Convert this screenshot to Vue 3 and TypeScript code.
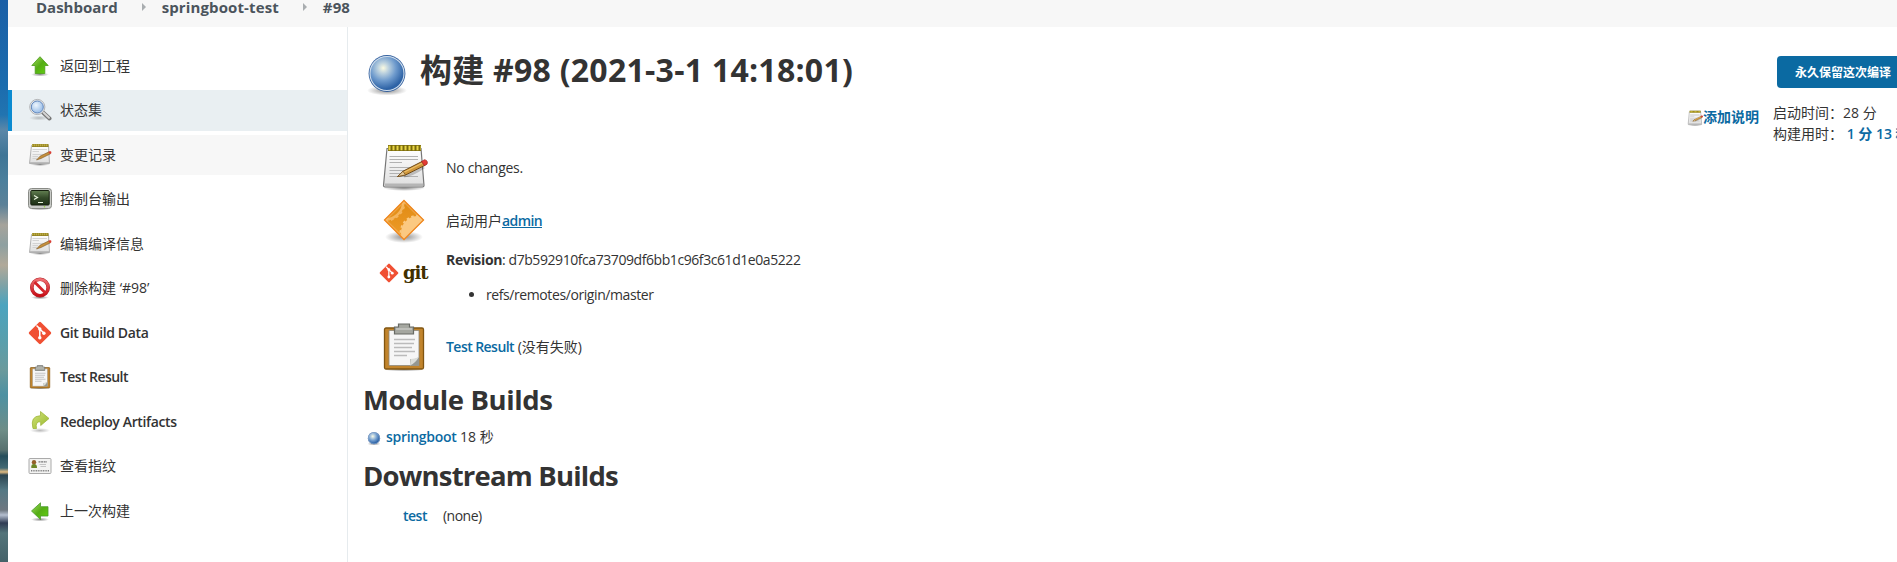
<script setup lang="ts">
interface Task { icon: string; label: string; state?: 'active' | 'hover'; tone?: 'latin' | 'latin tight' }

const crumbs: string[] = ['Dashboard', 'springboot-test', '#98']
const tasks: Task[] = [
  { icon: 'up', label: '返回到工程' },
  { icon: 'search', label: '状态集', state: 'active' },
  { icon: 'notepad-small', label: '变更记录', state: 'hover' },
  { icon: 'terminal', label: '控制台输出' },
  { icon: 'notepad-small', label: '编辑编译信息' },
  { icon: 'delete', label: '删除构建 ‘#98’' },
  { icon: 'git', label: 'Git Build Data', tone: 'latin' },
  { icon: 'clipboard', label: 'Test Result', tone: 'latin tight' },
  { icon: 'redo', label: 'Redeploy Artifacts', tone: 'latin' },
  { icon: 'card', label: '查看指纹' },
  { icon: 'previous', label: '上一次构建' },
]
</script>

<template>
  <div class="screen">
    <svg class="defs" width="0" height="0" aria-hidden="true">
      <defs>
        <linearGradient id="green" x1="0" y1="0" x2="1" y2="1">
          <stop offset="0" stop-color="#a4dc62" /><stop offset=".5" stop-color="#55ad15" /><stop offset="1" stop-color="#62d410" />
        </linearGradient>
        <linearGradient id="lime" x1="0" y1="0" x2="1" y2="1">
          <stop offset="0" stop-color="#d3e37c" /><stop offset="1" stop-color="#97b92b" />
        </linearGradient>
        <radialGradient id="shade"><stop offset="0" stop-color="#000" stop-opacity=".45" /><stop offset="1" stop-color="#000" stop-opacity="0" /></radialGradient>
        <radialGradient id="ball" cx=".39" cy=".34" r=".62">
          <stop offset="0" stop-color="#fbfbe2" /><stop offset=".25" stop-color="#bdd2df" /><stop offset=".6" stop-color="#6f9bcd" /><stop offset="1" stop-color="#2e63a6" />
        </radialGradient>
        <radialGradient id="lens" cx=".4" cy=".35" r=".7"><stop offset="0" stop-color="#edf5fd" /><stop offset="1" stop-color="#92b9e6" /></radialGradient>
        <linearGradient id="page" x1="0" y1="0" x2="0" y2="1"><stop offset="0" stop-color="#fff" /><stop offset="1" stop-color="#dedede" /></linearGradient>
        <linearGradient id="screenfill" x1="0" y1="0" x2="0" y2="1"><stop offset="0" stop-color="#638052" /><stop offset=".5" stop-color="#344a29" /><stop offset="1" stop-color="#1d3015" /></linearGradient>
        <linearGradient id="red" x1="0" y1="0" x2="0" y2="1"><stop offset="0" stop-color="#ee6d70" /><stop offset="1" stop-color="#c80f17" /></linearGradient>
        <linearGradient id="orange" x1="0" y1="0" x2="0" y2="1"><stop offset="0" stop-color="#e08a13" /><stop offset="1" stop-color="#ee9d2a" /></linearGradient>
        <clipPath id="diamond"><path d="M24 4.500 43.500 24 24 43.500 4.500 24z" /></clipPath>
      </defs>
      <symbol id="up" viewBox="0 0 24 24">
        <ellipse cx="12" cy="20.500" rx="9" ry="2" fill="url(#shade)" />
        <path d="M12 2.700 20.200 11.500H16.800V19.500H7.200V11.500H3.800z" fill="url(#green)" stroke="#4a9a18" stroke-width=".8" />
      </symbol>
      <symbol id="previous" viewBox="0 0 24 24">
        <ellipse cx="12" cy="20.500" rx="9" ry="2" fill="url(#shade)" />
        <path d="M3.500 12 12.500 3.800V7.700H20V17H12.500V20.500z" fill="url(#green)" stroke="#4a9a2c" stroke-width=".8" />
      </symbol>
      <symbol id="search" viewBox="0 0 24 24">
        <ellipse cx="11" cy="20" rx="10" ry="2.500" fill="url(#shade)" opacity=".5" />
        <path d="m15 14.500 6.500 6" stroke="#777" stroke-width="4" stroke-linecap="round" />
        <path d="m15.500 14.500 5.500 5.200" stroke="#d5d5d5" stroke-width="2" stroke-linecap="round" />
        <circle cx="9.300" cy="9" r="7.600" fill="#e6e8ea" stroke="#a4a6a8" stroke-width=".8" />
        <circle cx="9.300" cy="9" r="6" fill="url(#lens)" stroke="#6288bd" stroke-width="1" />
      </symbol>
      <symbol id="notepad" viewBox="0 0 48 48">
        <ellipse cx="24" cy="45" rx="21" ry="3" fill="url(#shade)" />
        <path d="M7 5.500H41L44 42.500Q44 44 42.500 44H5Q3.500 44 3.500 42.500z" fill="url(#page)" stroke="#777" stroke-width="1.200" />
        <path d="M5 40.500h38v2.500H5z" fill="#b5b5b5" />
        <path d="M9.500 13.500H38M9.500 16.500H38M9.500 19.500H22M9.500 24.500H33M9.500 27.500H29M9.500 30.500H25M9.500 33.500H38" stroke="#b1b1b1" stroke-width="1" />
        <path d="M8 5H41" stroke="#7a6a0c" stroke-width="6" />
        <path d="M8.500 5H41" stroke="#e8d646" stroke-width="4.500" stroke-dasharray="2 2" />
        <path d="M24 33q8-1 20-9" stroke="#0003" stroke-width="3" fill="none" />
        <path d="M17.500 33.500 23 28.200 42 18.500 45.800 19.300 45 22.300 25.500 32z" fill="#cf963a" stroke="#6f4a18" stroke-width="1" />
        <path d="M24 29.300 42 20.300" stroke="#ecc06a" stroke-width="1.200" />
        <path d="M17.500 33.500 23 28.200 25.500 32z" fill="#e5c794" stroke="#6f4a18" stroke-width=".7" />
        <path d="m41.500 18.500 3-1.800q4 .8 2.500 4.500l-2.500 1.500z" fill="#e33b34" stroke="#9d2420" stroke-width=".7" />
      </symbol>
      <symbol id="notepad-small" viewBox="0 0 24 24">
        <ellipse cx="12" cy="21.500" rx="10" ry="1.500" fill="url(#shade)" />
        <path d="M3.500 2.500H20.500L21.500 20.500H1.500z" fill="url(#page)" stroke="#a9a9a9" stroke-width=".9" />
        <path d="M2 19.500H21" stroke="#bcbcbc" />
        <path d="M4.500 6.500H19M4.500 8.500H11M4.500 11.500H15M4.500 13.500H10M4.500 15.500H9" stroke="#ccc" stroke-width=".8" />
        <path d="M4 2.500H20.500" stroke="#8d7d21" stroke-width="3" />
        <path d="M4.300 2.300H20.500" stroke="#d3c254" stroke-width="2" stroke-dasharray="1 1" />
        <path d="M8.500 17 12 13.200 21 8.800 22.500 10.800 13 15.500z" fill="#c58f3c" stroke="#7c5823" stroke-width=".6" />
        <path d="m20.500 9 1.500-1q2 .3 1.300 2.300L22 11z" fill="#dd3b34" />
      </symbol>
      <symbol id="terminal" viewBox="0 0 24 24">
        <ellipse cx="12" cy="21.500" rx="11" ry="2" fill="url(#shade)" />
        <rect x=".5" y="1.500" width="23" height="20" rx="3" fill="#c9cbc7" stroke="#898b86" />
        <rect x="2.800" y="3.500" width="18.400" height="14.500" rx="1" fill="url(#screenfill)" stroke="#17210f" />
        <path d="m6 8.500 3.500 2L6 12.500M10 15.500h5" fill="none" stroke="#e8f3dd" stroke-width="1.200" />
        <circle cx="16.500" cy="19.800" r=".8" fill="#93d936" />
      </symbol>
      <symbol id="delete" viewBox="0 0 24 24">
        <ellipse cx="12" cy="21.500" rx="9" ry="1.800" fill="url(#shade)" />
        <circle cx="12" cy="11.500" r="8.200" fill="#fff" stroke="#b1262b" stroke-width="3.600" />
        <circle cx="12" cy="11.500" r="8.200" fill="none" stroke="url(#red)" stroke-width="2.700" />
        <path d="m6.500 6 11 11" stroke="#d4252b" stroke-width="2.800" />
      </symbol>
      <symbol id="git" viewBox="0 0 24 24">
        <rect x="3.700" y="3.700" width="16.600" height="16.600" rx="1.300" transform="rotate(45 12 12)" fill="#f05033" />
        <path d="M8.500 4.500 11.800 7.800V16.500M11.800 8l4 4" fill="none" stroke="#fff" stroke-width="1.500" />
        <g fill="#fff"><circle cx="11.800" cy="8" r="1.700" /><circle cx="11.800" cy="16.800" r="1.700" /><circle cx="15.900" cy="12.200" r="1.700" /></g>
      </symbol>
      <symbol id="clipboard" viewBox="0 0 48 48">
        <ellipse cx="24" cy="46.500" rx="21" ry="2" fill="url(#shade)" />
        <rect x="4.500" y="5" width="39" height="41" rx="1.500" fill="#c1842c" stroke="#815511" stroke-width="1.300" />
        <path d="M9 7.500H39V42.500H9z" fill="#f6f6f6" stroke="#8e897c" stroke-width=".8" />
        <path d="M14 16.500H35M14 20.500H34M14 24.500H32M14 28.500H35M14 32.500H27" stroke="#bbb" stroke-width="1.700" />
        <path d="M30 42.500V36Q35 37 39 34V42.500z" fill="#949791" /><path d="M30 42.500q5-2 9-8.500-4 2-8.500 2z" fill="#dadcd8" />
        <path d="M18.500 4V1H29.500V4H33.500V11H14.500V4z" fill="#a5a7a0" stroke="#686a64" stroke-width="1.200" />
        <path d="M16 6H32" stroke="#cfd1cb" stroke-width="1.200" />
      </symbol>
      <symbol id="redo" viewBox="0 0 24 24">
        <ellipse cx="12" cy="20.500" rx="10" ry="2.500" fill="url(#shade)" opacity=".6" />
        <path d="M12.500 1.500 21 8.500 12.700 15.500V11.800Q7 11.200 8.500 18.500H5Q1.800 6 12.500 5.700z" fill="url(#lime)" stroke="#a0b63c" stroke-width=".8" />
      </symbol>
      <symbol id="card" viewBox="0 0 24 24">
        <rect x="1" y="4.500" width="22" height="15" rx="1" fill="#f3f3f2" stroke="#aaa" />
        <circle cx="6" cy="8.300" r="2.200" fill="#94602a" /><path d="M3.300 14q-.5-4 2.700-4t3 4z" fill="#6d8627" />
        <path d="M10.500 7.800H19" stroke="#777" stroke-width="1.300" stroke-dasharray="2 .6" /><path d="M11.500 10.500H18M12.500 12.500H18" stroke="#c4c4c4" />
        <path d="M3 16.800H21" stroke="#808080" stroke-width="1.500" stroke-dasharray="1 .7" />
      </symbol>
      <symbol id="status" viewBox="0 0 48 48">
        <ellipse cx="24" cy="41.500" rx="20" ry="5" fill="url(#shade)" />
        <circle cx="24" cy="24.500" r="18.400" fill="#34619f" /><circle cx="24" cy="24.500" r="17" fill="url(#ball)" stroke="#d3e0ee" stroke-width="1.100" />
      </symbol>
      <symbol id="build" viewBox="0 0 48 48">
        <ellipse cx="24" cy="41" rx="19" ry="6" fill="url(#shade)" />
        <path d="M24 4 44 24 24 44 4 24z" fill="url(#orange)" />
        <g clip-path="url(#diamond)" fill="none" stroke="#f4b45d">
          <circle cx="5" cy="5" r="18.500" stroke-width="2.400" />
          <circle cx="5" cy="5" r="20" stroke-width="1.600" stroke-dasharray="2.800 2.800" />
          <circle cx="38" cy="37" r="17" fill="#fbc981" stroke="none" />
          <circle cx="38" cy="37" r="17.500" stroke="#fbc981" stroke-width="1.800" stroke-dasharray="2.500 2.500" />
        </g>
        <path d="M24 4.500 43.500 24 24 43.500 4.500 24z" fill="none" stroke="#f08a24" stroke-width="1.300" />
        <path d="M24 6.300 41.700 24 24 41.700 6.300 24z" fill="none" stroke="#fcc680" stroke-width=".8" opacity=".7" />
      </symbol>
    </svg>

    <div class="wallpaper"></div>
    <div class="window">
      <nav class="crumbs">
        <template v-for="(c, i) in crumbs" :key="c">
          <i v-if="i" class="sep"></i><a>{{ c }}</a>
        </template>
      </nav>
      <div class="body">
        <aside class="tasks">
          <a v-for="t in tasks" :key="t.label" class="task" :class="t.state">
            <svg class="task-icon"><use :href="'#' + t.icon" /></svg><span :class="t.tone">{{ t.label }}</span>
          </a>
        </aside>
        <main class="main">
          <div class="content">
            <h1><svg class="big"><use href="#status" /></svg><span>构建 #98 (2021-3-1 14:18:01)</span></h1>
            <div class="row raised"><svg class="big"><use href="#notepad" /></svg><p class="nochange">No changes.</p></div>
            <div class="row raised"><svg class="big"><use href="#build" /></svg><p>启动用户<a class="user">admin</a></p></div>
            <div class="row revision">
              <div class="gitlogo"><svg><use href="#git" /></svg><b>git</b></div>
              <div class="rev">
                <p><b>Revision</b><span class="hash">: d7b592910fca73709df6bb1c96f3c61d1e0a5222</span></p>
                <ul><li>refs/remotes/origin/master</li></ul>
              </div>
            </div>
            <div class="row"><svg class="big"><use href="#clipboard" /></svg><p><a class="result">Test Result</a> (没有失败)</p></div>
            <h2>Module Builds</h2>
            <p class="module"><svg><use href="#status" /></svg><a>springboot</a><span>18 秒</span></p>
            <h2 class="down">Downstream Builds</h2>
            <p class="downstream"><a>test</a><span>(none)</span></p>
          </div>
          <div class="side">
            <a class="describe"><svg><use href="#notepad" /></svg><span>添加说明</span></a>
            <div class="facts">
              <button>永久保留这次编译</button>
              <p>启动时间：28 分</p>
              <p>构建用时： <a>1 分 13 秒</a></p>
            </div>
          </div>
        </main>
      </div>
    </div>
  </div>
</template>

<style>
body { margin: 0; overflow: hidden; background: #fff; }
</style>

<style scoped>
.screen { display: flex; width: 1897px; height: 562px; overflow: hidden; background: #fff; color: #333; font: 14px/21px "Open Sans", "Noto Sans CJK SC", sans-serif; position: relative; }
.defs { position: absolute; }
svg { flex: none; overflow: visible; }
p, h1, h2, ul { margin: 0; padding: 0; }
a { color: #0b6aa2; font-weight: 600; }
.wallpaper { flex: none; width: 8px; background: linear-gradient(180deg, #1a5fa6 0, #1b6cae 85px, #2274b0 115px, #5b87a8 130px, #3f7596 155px, #4b7f9c 180px, #5c8198 205px, #a6a39b 225px, #8ea0a1 245px, #b1a999 265px, #7fa2a6 285px, #4ba4bf 305px, #599fad 340px, #6b9a9c 370px, #4d91a2 395px, #6e8d87 430px, #58716f 450px, #254d5b 456px, #426974 468px, #e1ba80 472px, #2b4450 475px, #547884 490px, #6e7780 510px, #b5bfd0 515px, #303c54 523px, #53747a 533px, #456269 562px); }
.window { flex: 1; min-width: 0; display: flex; flex-direction: column; }
.crumbs { height: 27px; flex: none; display: flex; align-items: flex-start; background: #f7f7f7; padding-left: 28px; }
.crumbs a { color: #4b545c; font-weight: 700; font-size: 15px; line-height: 22px; margin-top: -4px; }
.crumbs a:not(:first-child) { letter-spacing: .12px; }
.sep { width: 0; height: 0; border: 4px solid transparent; border-left-color: #a9adb0; border-right: 0; margin: 3px 16px 0 24px; }
.body { flex: 1; display: flex; min-height: 0; }
.tasks { width: 339px; flex: none; padding-top: 18.500px; border-right: 1px solid #e6ebee; display: flex; flex-direction: column; gap: 4px; }
.task { height: 40.500px; flex: none; display: flex; align-items: center; padding-left: 20px; gap: 8px; color: #333; font-weight: 400; }
.task span { margin-top: -1px; }
.task.active { background: #e9eff2; box-shadow: inset 4px 0 #0b8ad0; }
.task.hover { background: #f7f7f7; }
.task-icon { width: 24px; height: 24px; }
.latin { font-weight: 600; letter-spacing: -.37px; }
.tight { letter-spacing: -.57px; }
.main { flex: 1; min-width: 0; display: flex; justify-content: space-between; }
.content { padding: 21px 0 0 15px; width: 900px; }
h1 { height: 93px; display: flex; align-items: flex-start; gap: 9px; font-size: 32px; line-height: 46px; font-weight: 700; letter-spacing: .26px; }
h1 span { margin-top: -1px; }
h1 .big { margin-top: 1px; }
.big { width: 48px; height: 48px; }
.row { display: flex; align-items: center; height: 53px; padding-left: 17px; gap: 18px; }
.row.raised .big { margin-top: -2px; }
.row.revision { height: 73px; align-items: flex-start; }
.nochange { letter-spacing: -.3px; }
.gitlogo { width: 49px; height: 48px; display: flex; align-items: center; gap: 4px; margin: 2px 0 0 -1px; }
.gitlogo svg { width: 20px; height: 20px; }
.gitlogo b { font: 700 18px/26px "DejaVu Serif", serif; color: #413000; letter-spacing: -1.100px; margin-top: -1px; }
.rev { padding-top: 2px; }
.rev b { letter-spacing: -.35px; }
.hash { letter-spacing: -.43px; }
.rev ul { padding: 14px 0 0 40px; }
.rev li { letter-spacing: -.41px; }
.user { text-decoration: underline; letter-spacing: -.6px; }
.result { letter-spacing: -.55px; }
h2 { font-size: 27.500px; line-height: 38px; margin-top: 8px; letter-spacing: -.4px; }
.module { display: flex; align-items: center; height: 21px; margin-top: 7px; padding-left: 3px; }
.module svg { width: 16px; height: 16px; margin: 2px 4px 0 0; }
.module a { letter-spacing: -.3px; margin-right: 3.500px; }
h2.down { margin-top: 10px; letter-spacing: -.8px; }
.downstream { display: flex; gap: 16px; padding-left: 40px; margin-top: 10px; letter-spacing: -.5px; }
.side { flex: none; display: flex; gap: 14px; padding-top: 29px; }
.describe { display: flex; align-items: center; height: 21px; margin-top: 50px; font-weight: 700; }
.describe svg { width: 16px; height: 16px; margin-top: 3px; }
.facts { width: 124px; white-space: nowrap; }
.facts button { display: block; width: 132px; height: 32px; margin: 0 0 14px 4px; border: 0; border-radius: 4px; background: #0b6aa2; color: #fff; font: 700 12px/32px "Open Sans", "Noto Sans CJK SC", sans-serif; padding: 1px 0 0; }
.facts a { font-weight: 600; }
</style>
